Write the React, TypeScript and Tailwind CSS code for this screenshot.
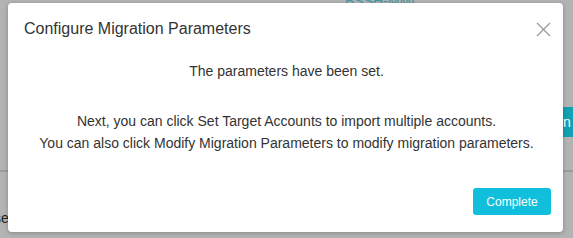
import React from 'react';

const App: React.FC = () => {
  return (
    <div className="relative w-full h-[238px] overflow-hidden bg-[#b3b3b3] font-['Liberation_Sans',Arial,sans-serif]">
      {/* page behind the overlay */}
      <div className="absolute left-[345px] -top-[9px] text-[14px] text-[#3d9aa6]">BSSH-MMI</div>
      <div className="absolute right-0 top-[107px] w-[14px] h-[30px] rounded-l-[3px] bg-[#12a0b3] text-white text-[14px] leading-[30px] pl-[4px]">n</div>
      <div className="absolute left-0 right-0 top-[170px] h-[2px] bg-[#9c9c9c]"></div>
      <div className="absolute -left-[6px] top-[208px] text-[14px] text-[#222]">se</div>

      <div className="relative ml-[8px] mt-[3px] w-[555px] h-[229px] bg-white rounded-[4px] shadow-[0_1px_4px_rgba(0,0,0,0.25)] flex flex-col">
        <div className="flex items-center justify-between pl-4 pr-[12px] pt-[14px]">
          <h2 className="text-[16px] leading-[24px] text-[#333]">Configure Migration Parameters</h2>
          <button className="w-[16px] h-[16px] flex items-center justify-center text-[#999]">
            <svg width="15" height="15" viewBox="0 0 15 15" fill="none" stroke="currentColor" strokeWidth="1.3">
              <path d="M1 1L14 14M14 1L1 14" />
            </svg>
          </button>
        </div>
        <div className="flex flex-col items-center text-[14px] leading-[22px] text-[#333] mt-[19px] pl-[2px]">
          <p>The parameters have been set.</p>
          <p className="mt-[28px]">Next, you can click Set Target Accounts to import multiple accounts.</p>
          <p>You can also click Modify Migration Parameters to modify migration parameters.</p>
        </div>
        <div className="flex justify-end mt-auto pr-[12px] pb-[17px]">
          <button className="w-[78px] h-[27px] rounded-[3px] bg-[#0fbfdc] text-white text-[12px]">Complete</button>
        </div>
      </div>
    </div>
  );
};

export default App;
